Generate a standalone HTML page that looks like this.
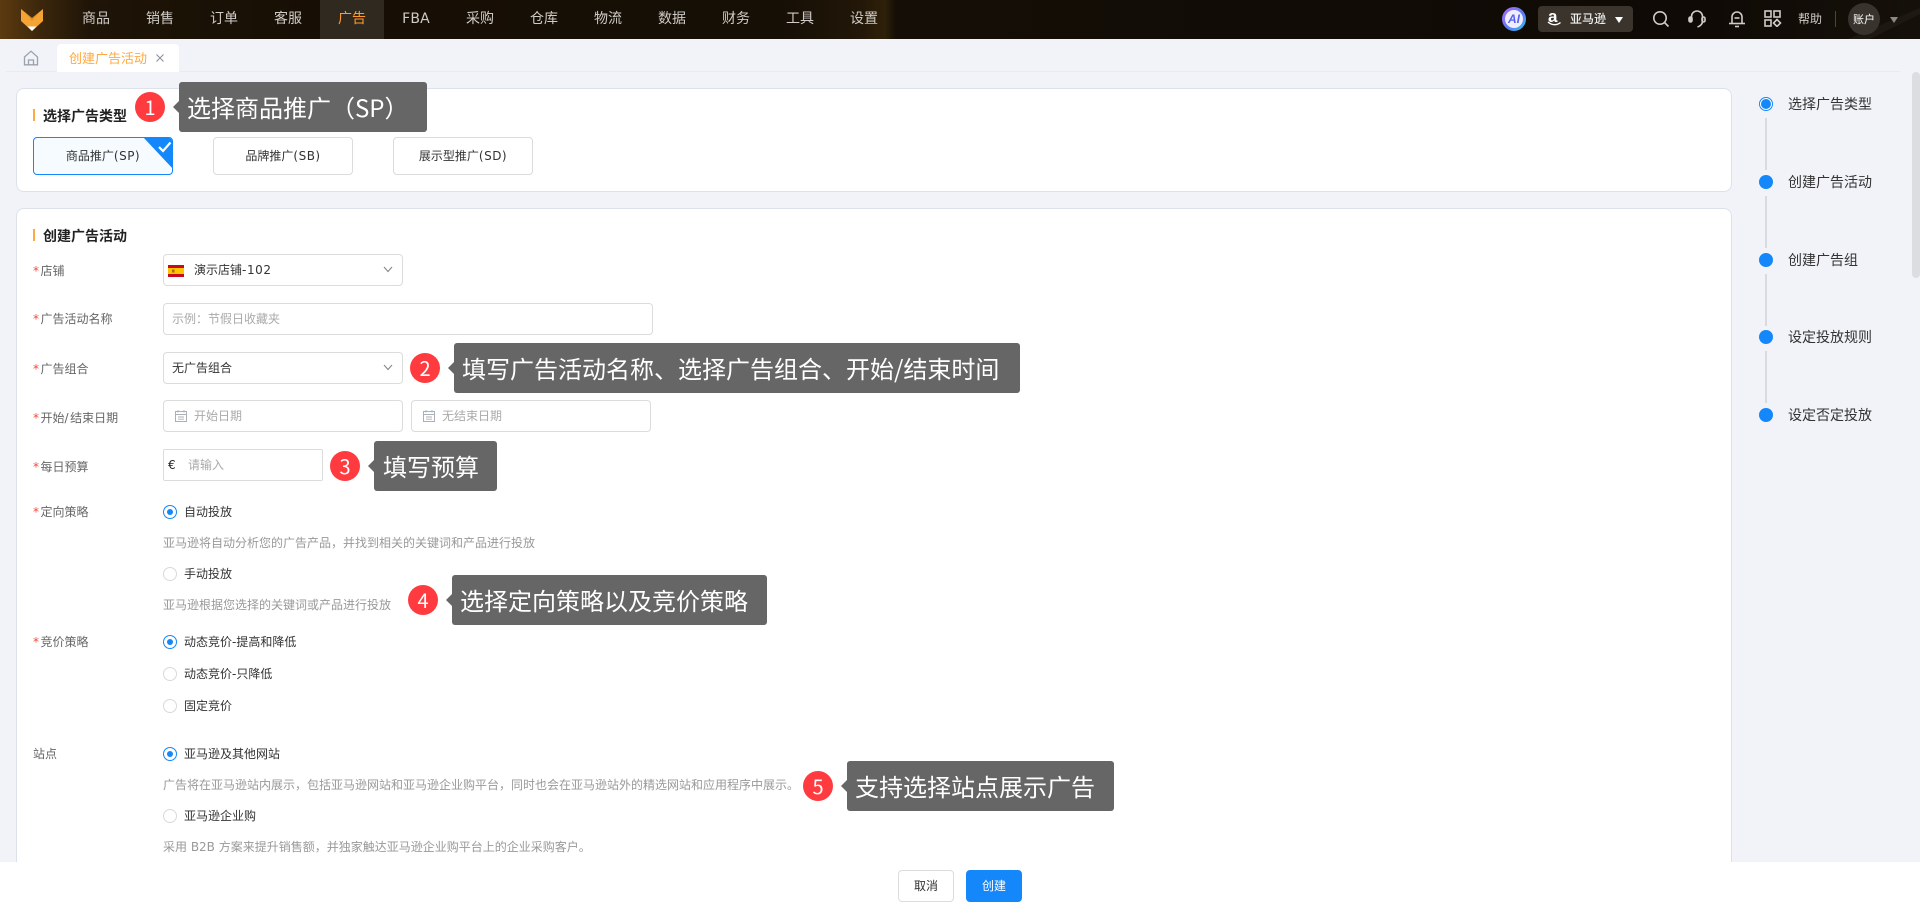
<!DOCTYPE html>
<html lang="zh-CN">
<head>
<meta charset="utf-8">
<title>创建广告活动</title>
<style>
html,body{margin:0;padding:0;width:1920px;height:910px;overflow:hidden;background:#f1f3f8}
body{position:relative;font-family:"DejaVu Sans","Noto Sans CJK SC",sans-serif;font-size:12px;color:#333}
*{box-sizing:border-box}
.a{position:absolute}
.t{position:absolute;line-height:20px;height:20px;white-space:nowrap}
#nav{left:0;top:0;width:1920px;height:39px;background:linear-gradient(90deg,#5c3a10 0,#3c270c 40px,#1e1407 90px,#170f05 300px,#160f06 780px,#221708 860px,#2e2009 885px,#140e06 896px,#0f0a05 1700px,#15100a 1920px)}
.n{position:absolute;top:9px;width:64px;text-align:center;color:#cfcbc6;font-size:14px;line-height:20px;height:20px}
.card{position:absolute;background:#fff;border:1px solid #dde2ea;border-radius:8px}
.bar{position:absolute;width:2px;background:#ffa940;height:12px}
.ttl{position:absolute;font-size:14px;font-weight:700;color:#222;line-height:20px;height:20px;white-space:nowrap;font-family:"Noto Sans CJK SC",sans-serif}
.opt{position:absolute;top:137px;width:140px;height:38px;border:1px solid #dcdcdc;border-radius:4px;background:#fff;text-align:center;line-height:36px;color:#333}
.lab{color:#666;left:33px}
.lab b{color:#f5483b;font-weight:400;margin-right:1.5px}
.ls{letter-spacing:.5px}
.box{position:absolute;height:32px;border:1px solid #dcdcdc;border-radius:4px;background:#fff}
.ph{color:#aaa}
.help{color:#999;left:163px}
.r{position:absolute;left:163px;width:14px;height:14px;border-radius:50%;border:1px solid #d9d9d9;background:#fff}
.r.on{border-color:#1487fa}
.r.on:after{content:"";position:absolute;left:3px;top:3px;width:6px;height:6px;border-radius:50%;background:#1487fa}
.rt{left:184px;color:#333}
.num{position:absolute;width:30px;height:30px;border-radius:50%;background:#ff3b3f;color:#fff;font-size:20px;line-height:29px;text-align:center;font-family:"Noto Sans CJK SC",sans-serif}
.tip{position:absolute;height:50px;background:#666;border-radius:3px;color:#fff;font-size:24px;line-height:50px;white-space:nowrap;font-family:"Noto Sans CJK SC",sans-serif}
.tip:before{content:"";position:absolute;left:-6px;top:19px;border:6px solid transparent;border-left:0;border-right-color:#666}
.dot{position:absolute;left:1759px;width:14px;height:14px;border-radius:50%;background:#1487fa}
.ln{position:absolute;left:1765px;width:2px;height:52px;background:#d9dade}
.st{left:1788px;font-size:14px;color:#333}
.btn{position:absolute;top:870px;width:56px;height:32px;border-radius:4px;text-align:center;line-height:30px;border:1px solid #dcdcdc;background:#fff;color:#333}
svg{position:absolute;display:block}
</style>
</head>
<body>
<div class="a" id="nav"></div>
<svg style="left:1820px;top:0" width="100" height="39" viewBox="0 0 100 39"><path d="M28 39L100 8V14L50 39Z" fill="#fff" opacity=".04"/></svg>
<div class="a" style="left:320px;top:0;width:64px;height:39px;background:#30291f"></div>
<svg style="left:20px;top:8px" width="24" height="24" viewBox="0 0 24 24">
<path d="M1 1 L12 10 L23 1 V13 L12 23 L1 13Z" fill="#f5a332"/>
<path d="M5 4.5 L12 10.5 L19 4.5 L12 13Z" fill="#dd8f28"/>
<path d="M7.5 18.5 H16.5 L12 23Z" fill="#fff"/>
</svg>
<div class="n" style="left:64px">商品</div>
<div class="n" style="left:128px">销售</div>
<div class="n" style="left:192px">订单</div>
<div class="n" style="left:256px">客服</div>
<div class="n" style="left:320px;color:#ff9a2e">广告</div>
<div class="n" style="left:384px;letter-spacing:.2px">FBA</div>
<div class="n" style="left:448px">采购</div>
<div class="n" style="left:512px">仓库</div>
<div class="n" style="left:576px">物流</div>
<div class="n" style="left:640px">数据</div>
<div class="n" style="left:704px">财务</div>
<div class="n" style="left:768px">工具</div>
<div class="n" style="left:832px">设置</div>

<!-- right nav -->
<div class="a" style="left:1502px;top:7px;width:24px;height:24px;border-radius:50%;background:linear-gradient(135deg,#b06af5,#5a7bf5 55%,#38c6e8);"></div>
<div class="a" style="left:1505px;top:10px;width:18px;height:18px;border-radius:50%;background:#efeeff;text-align:center;line-height:18px;color:#5a5ff0;font-size:12px;font-weight:700;font-style:italic;font-family:'Liberation Sans',sans-serif">AI</div>
<div class="a" style="left:1538px;top:6px;width:95px;height:26px;background:#3a342c;border-radius:4px"></div>
<div class="t" style="left:1548px;top:7px;color:#fff;font-size:17px;font-weight:700;font-family:'Liberation Sans',sans-serif;line-height:20px">a</div>
<svg style="left:1547px;top:21px" width="15" height="6" viewBox="0 0 15 6"><path d="M1 1C5 4.5 10 4.5 13.5 1.5" fill="none" stroke="#fff" stroke-width="1.4"/></svg>
<div class="t" style="left:1570px;top:9px;color:#eee;font-size:12px;font-weight:500;font-family:'Noto Sans CJK SC',sans-serif">亚马逊</div>
<svg style="left:1615px;top:17px" width="8" height="6" viewBox="0 0 8 6"><path d="M0 0H8L4 6Z" fill="#fff"/></svg>
<svg style="left:1652px;top:10px" width="18" height="18" viewBox="0 0 18 18" fill="none" stroke="#cfcbc6" stroke-width="1.6"><circle cx="8" cy="8" r="6.2"/><path d="M12.5 12.5L16.5 16.5"/></svg>
<svg style="left:1688px;top:10px" width="18" height="18" viewBox="0 0 18 18" fill="none" stroke="#cfcbc6" stroke-width="1.6"><path d="M3.5 8V6.5a5.5 5.5 0 0 1 11 0V11c0 3-2 5-5 6"/><rect x="1" y="7" width="3" height="5" rx="1.5" fill="#cfcbc6"/><rect x="14" y="7" width="3" height="5" rx="1.5"/></svg>
<svg style="left:1728px;top:10px" width="18" height="18" viewBox="0 0 18 18" fill="none" stroke="#cfcbc6" stroke-width="1.6"><path d="M4 13V7a5 5 0 0 1 10 0v6"/><path d="M1 13.5H17"/><path d="M7 16.5H11"/><path d="M6.5 8H11.5"/></svg>
<svg style="left:1764px;top:10px" width="18" height="17" viewBox="0 0 18 17" fill="none" stroke="#cfcbc6" stroke-width="1.6"><rect x="1" y="1" width="6" height="6"/><rect x="10" y="1" width="6" height="6"/><rect x="1" y="10" width="6" height="6"/><path d="M13 9.5L16.5 13L13 16.5L9.5 13Z"/></svg>
<div class="t" style="left:1798px;top:9px;color:#cfcbc6;font-family:'Noto Sans CJK SC',sans-serif">帮助</div>
<div class="a" style="left:1835px;top:11px;width:1px;height:16px;background:#4a453e"></div>
<div class="a" style="left:1848px;top:3px;width:32px;height:32px;border-radius:50%;background:#38332d;text-align:center;line-height:32px;color:#fff;font-size:11px;font-family:'Noto Sans CJK SC',sans-serif">账户</div>
<svg style="left:1890px;top:17px" width="8" height="6" viewBox="0 0 8 6"><path d="M0 0H8L4 6Z" fill="#8d8983"/></svg>

<!-- tab strip -->
<div class="a" style="left:6px;top:71px;width:1894px;height:1px;background:#e8ebf0"></div>
<svg style="left:23px;top:50px" width="16" height="16" viewBox="0 0 16 16" fill="none" stroke="#9aa2ad" stroke-width="1.3"><path d="M1.5 7L8 1.2 14.5 7V14.8H1.5Z"/><path d="M5.5 14.8V10H10.5V14.8"/></svg>
<div class="a" style="left:57px;top:44px;width:122px;height:28px;background:#fff;border-radius:4px 4px 0 0"></div>
<div class="t" style="left:69px;top:48px;color:#ffa940;font-size:13px;font-family:'Noto Sans CJK SC',sans-serif">创建广告活动</div>
<svg style="left:156px;top:54px" width="8" height="8" viewBox="0 0 8 8" fill="none" stroke="#8a929c" stroke-width="1.1"><path d="M.5.5L7.5 7.5M7.5.5L.5 7.5"/></svg>

<!-- card 1 -->
<div class="card" style="left:16px;top:88px;width:1716px;height:104px"></div>
<div class="bar" style="left:33px;top:109px"></div>
<div class="ttl" style="left:43px;top:106px">选择广告类型</div>
<div class="opt" style="left:33px;border-color:#1487fa;background:#f6fbff;overflow:hidden">商品推广<span class="ls">(SP)</span>
<svg style="right:-1px;top:-1px" width="30" height="32" viewBox="0 0 30 32"><path d="M0 0H30V32Z" fill="#1487fa"/><path d="M16 10L20 14L27.5 5.5" fill="none" stroke="#fff" stroke-width="2.2"/></svg></div>
<div class="opt" style="left:213px">品牌推广<span class="ls">(SB)</span></div>
<div class="opt" style="left:393px">展示型推广<span class="ls">(SD)</span></div>

<!-- card 2 -->
<div class="card" style="left:16px;top:208px;width:1716px;height:720px"></div>
<div class="bar" style="left:33px;top:229px"></div>
<div class="ttl" style="left:43px;top:226px">创建广告活动</div>

<div class="t lab" style="top:261px"><b>*</b>店铺</div>
<div class="box" style="left:163px;top:254px;width:240px"></div>
<svg style="left:168px;top:265px" width="16" height="12" viewBox="0 0 16 12"><rect width="16" height="12" fill="#c60b1e"/><rect y="3" width="16" height="6" fill="#ffc400"/><rect x="4" y="4.5" width="2.5" height="3" fill="#ad6a1d"/></svg>
<div class="t" style="left:194px;top:260px;color:#333">演示店铺<span style="letter-spacing:.6px">-102</span></div>
<svg style="left:383px;top:266px" width="10" height="7" viewBox="0 0 10 7" fill="none" stroke="#888" stroke-width="1.1"><path d="M1 1L5 5.5L9 1"/></svg>

<div class="t lab" style="top:309px"><b>*</b>广告活动名称</div>
<div class="box" style="left:163px;top:303px;width:490px"></div>
<div class="t ph" style="left:172px;top:309px">示例：节假日收藏夹</div>

<div class="t lab" style="top:359px"><b>*</b>广告组合</div>
<div class="box" style="left:163px;top:352px;width:240px"></div>
<div class="t" style="left:172px;top:358px">无广告组合</div>
<svg style="left:383px;top:364px" width="10" height="7" viewBox="0 0 10 7" fill="none" stroke="#888" stroke-width="1.1"><path d="M1 1L5 5.5L9 1"/></svg>

<div class="t lab" style="top:408px"><b>*</b>开始<span style="letter-spacing:1.5px">/</span>结束日期</div>
<div class="box" style="left:163px;top:400px;width:240px"></div>
<svg style="left:175px;top:410px" width="12" height="12" viewBox="0 0 12 12" fill="none" stroke="#aab0b8"><rect x=".5" y="1.5" width="11" height="10"/><path d="M.5 4.5H11.5M3 0V2.5M9 0V2.5M3 7H9M3 9.2H9" stroke-width=".9"/></svg>
<div class="t ph" style="left:194px;top:406px">开始日期</div>
<div class="box" style="left:411px;top:400px;width:240px"></div>
<svg style="left:423px;top:410px" width="12" height="12" viewBox="0 0 12 12" fill="none" stroke="#aab0b8"><rect x=".5" y="1.5" width="11" height="10"/><path d="M.5 4.5H11.5M3 0V2.5M9 0V2.5M3 7H9M3 9.2H9" stroke-width=".9"/></svg>
<div class="t ph" style="left:442px;top:406px">无结束日期</div>

<div class="t lab" style="top:457px"><b>*</b>每日预算</div>
<div class="box" style="left:163px;top:449px;width:160px;border-radius:2px"></div>
<div class="t" style="left:168px;top:455px;color:#222">€</div>
<div class="t ph" style="left:188px;top:455px">请输入</div>

<div class="t lab" style="top:502px"><b>*</b>定向策略</div>
<div class="r on" style="top:505px"></div><div class="t rt" style="top:502px">自动投放</div>
<div class="t help" style="top:533px">亚马逊将自动分析您的广告产品，并找到相关的关键词和产品进行投放</div>
<div class="r" style="top:567px"></div><div class="t rt" style="top:564px">手动投放</div>
<div class="t help" style="top:595px">亚马逊根据您选择的关键词或产品进行投放</div>

<div class="t lab" style="top:632px"><b>*</b>竞价策略</div>
<div class="r on" style="top:635px"></div><div class="t rt" style="top:632px">动态竞价-提高和降低</div>
<div class="r" style="top:667px"></div><div class="t rt" style="top:664px">动态竞价-只降低</div>
<div class="r" style="top:699px"></div><div class="t rt" style="top:696px">固定竞价</div>

<div class="t lab" style="top:744px">站点</div>
<div class="r on" style="top:747px"></div><div class="t rt" style="top:744px">亚马逊及其他网站</div>
<div class="t help" style="top:775px">广告将在亚马逊站内展示，包括亚马逊网站和亚马逊企业购平台，同时也会在亚马逊站外的精选网站和应用程序中展示。</div>
<div class="r" style="top:809px"></div><div class="t rt" style="top:806px">亚马逊企业购</div>
<div class="t help" style="top:837px">采用 B2B 方案来提升销售额，并独家触达亚马逊企业购平台上的企业采购客户。</div>

<!-- annotations -->
<div class="num" style="left:135px;top:92px">1</div>
<div class="tip" style="left:179px;top:82px;width:248px;padding-left:8px">选择商品推广（SP）</div>
<div class="num" style="left:410px;top:353px">2</div>
<div class="tip" style="left:454px;top:343px;width:566px;padding-left:8px">填写广告活动名称、选择广告组合、开始/结束时间</div>
<div class="num" style="left:330px;top:451px">3</div>
<div class="tip" style="left:374px;top:441px;width:123px;padding-left:9px">填写预算</div>
<div class="num" style="left:408px;top:585px">4</div>
<div class="tip" style="left:452px;top:575px;width:315px;padding-left:8px">选择定向策略以及竞价策略</div>
<div class="num" style="left:803px;top:771px">5</div>
<div class="tip" style="left:847px;top:761px;width:267px;padding-left:8px">支持选择站点展示广告</div>

<!-- steps -->
<div class="a" style="left:1759px;top:97px;width:14px;height:14px;border-radius:50%;border:1px solid #1487fa;background:#fff"></div>
<div class="a" style="left:1761px;top:99px;width:10px;height:10px;border-radius:50%;background:#1487fa"></div>
<div class="ln" style="top:118px"></div>
<div class="dot" style="top:175px"></div>
<div class="ln" style="top:196px"></div>
<div class="dot" style="top:253px"></div>
<div class="ln" style="top:274px"></div>
<div class="dot" style="top:330px"></div>
<div class="ln" style="top:351px"></div>
<div class="dot" style="top:408px"></div>
<div class="t st" style="top:95px">选择广告类型</div>
<div class="t st" style="top:173px">创建广告活动</div>
<div class="t st" style="top:251px">创建广告组</div>
<div class="t st" style="top:328px">设定投放规则</div>
<div class="t st" style="top:406px">设定否定投放</div>

<!-- scrollbar -->
<div class="a" style="left:1912px;top:72px;width:8px;height:206px;border-radius:4px;background:#dcdde1"></div>

<!-- footer -->
<div class="a" style="left:0;top:862px;width:1920px;height:48px;background:#fff"></div>
<div class="btn" style="left:898px">取消</div>
<div class="btn" style="left:966px;background:#1487fa;border-color:#1487fa;color:#fff">创建</div>
</body>
</html>
